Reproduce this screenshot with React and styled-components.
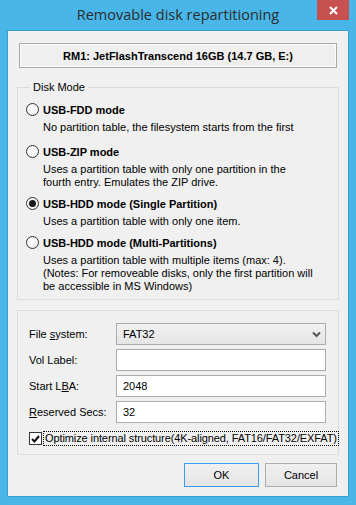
import React from 'react';
import styled, {createGlobalStyle} from 'styled-components';

const GlobalStyle = createGlobalStyle`
  html, body {
    margin: 0;
    padding: 0;
  }
  body {
    width: 356px;
    height: 505px;
    overflow: hidden;
    font-family: Tahoma, "Liberation Sans", sans-serif;
    font-size: 11px;
    color: #000;
  }
  * {
    box-sizing: border-box;
  }
`;

const Window = styled.div`
  width: 356px;
  height: 505px;
  display: flex;
  flex-direction: column;
  background: #48b6e8;
`;

const TitleBar = styled.div`
  height: 30px;
  flex: none;
  display: grid;
  grid-template-columns: 1fr auto 1fr;
  align-items: start;
`;

const Title = styled.div`
  grid-column: 2;
  padding-top: 6px;
  font-family: "Open Sans", "Noto Sans", sans-serif;
  font-size: 14.5px;
  line-height: 18px;
  color: #2d2d2d;
`;

const CloseButton = styled.div`
  grid-column: 3;
  justify-self: end;
  margin-right: 7px;
  width: 32px;
  height: 20px;
  background: #c75050;
  display: flex;
  align-items: center;
  justify-content: center;

  svg {
    width: 9px;
    height: 9px;
  }
`;

const Client = styled.div`
  flex: 1;
  margin: 0 7px 8px 7px;
  border: 1px solid #3b9fd2;
  background: #f0f0f0;
  display: flex;
  flex-direction: column;
`;

const DriveButton = styled.div`
  margin: 12px 11px 0 11px;
  height: 25px;
  border: 1px solid #a9a9a9;
  box-shadow: inset 0 0 0 1px #fbfbfb;
  background: #efefef;
  display: flex;
  align-items: center;
  justify-content: center;
  font-weight: bold;
`;

const Group = styled.fieldset`
  margin: ${({top}) => top}px 9px 0 9px;
  padding: ${({pad}) => pad};
  border: 1px solid #dcdcdc;
  min-width: 0;
`;

const Legend = styled.legend`
  margin-left: 4px;
  padding: 0 3px 0 3px;
  line-height: 13px;
  color: #000;
`;

const Option = styled.div`
  margin-top: ${({gap}) => gap}px;
`;

const RadioRow = styled.div`
  display: flex;
  align-items: center;
  height: 13px;
  gap: 4px;
  font-weight: bold;
`;

const Radio = styled.span`
  width: 13px;
  height: 13px;
  border-radius: 50%;
  border: 1px solid #333;
  background: radial-gradient(circle at 50% 40%, #ffffff 0%, #f4f4f4 60%, #e2e2e2 100%);
  display: flex;
  align-items: center;
  justify-content: center;
  flex: none;

  &::after {
    content: '';
    display: ${({checked}) => checked ? 'block' : 'none'};
    width: 7px;
    height: 7px;
    border-radius: 50%;
    background: #1a1a1a;
  }
`;

const Desc = styled.div`
  margin: 5px 0 0 17px;
  line-height: 13px;
`;

const Form = styled.div`
  display: grid;
  grid-template-columns: 87px 1fr;
  row-gap: 4px;
  align-items: center;
`;

const FieldLabel = styled.label`
  line-height: 13px;
`;

const TextBox = styled.div`
  height: 22px;
  border: 1px solid #ababab;
  background: #fff;
  display: flex;
  align-items: center;
  padding-left: 6px;
`;

const Select = styled(TextBox)`
  background: linear-gradient(#f2f2f2, #e5e5e5);
  border-color: #acacac;
  justify-content: space-between;
  padding-right: 4px;

  svg {
    width: 9px;
    height: 7px;
  }
`;

const CheckRow = styled.div`
  grid-column: 1 / 3;
  margin-top: 5px;
  height: 13px;
  display: flex;
  align-items: center;
  gap: 2px;
`;

const CheckBox = styled.span`
  width: 13px;
  height: 13px;
  border: 1px solid #333;
  background: #fff;
  display: flex;
  align-items: center;
  justify-content: center;
  flex: none;

  svg {
    width: 9px;
    height: 8px;
  }
`;

const CheckText = styled.span`
  outline: 1px dotted #000;
  outline-offset: 0;
  line-height: 13px;
  padding: 0 1px;
  letter-spacing: -0.1px;
  white-space: nowrap;
`;

const ButtonRow = styled.div`
  margin: 8px 11px 0 0;
  display: flex;
  justify-content: flex-end;
  gap: 6px;
`;

const Button = styled.div`
  width: ${({w}) => w}px;
  height: 24px;
  border: 1px solid ${({primary}) => primary ? '#3c9af0' : '#adadad'};
  background: linear-gradient(#f0f0f0, #e5e5e5);
  display: flex;
  align-items: center;
  justify-content: center;
`;

const modes = [
  {name: 'USB-FDD mode', desc: ['No partition table, the filesystem starts from the first'], gap: 9},
  {name: 'USB-ZIP mode', desc: ['Uses a partition table with only one partition in the', 'fourth entry. Emulates the ZIP drive.'], gap: 11},
  {name: 'USB-HDD mode (Single Partition)', desc: ['Uses a partition table with only one item.'], checked: true, gap: 8},
  {name: 'USB-HDD mode (Multi-Partitions)', desc: ['Uses a partition table with multiple items (max: 4).', '(Notes: For removeable disks, only the first partition will', 'be accessible in MS Windows)'], gap: 8},
];

export default function App() {
  return <>
    <GlobalStyle/>
    <Window>
      <TitleBar>
        <Title>Removable disk repartitioning</Title>
        <CloseButton>
          <svg viewBox="0 0 9 9">
            <path d="M1 1L8 8M8 1L1 8" stroke="#fff" strokeWidth="2"/>
          </svg>
        </CloseButton>
      </TitleBar>
      <Client>
        <DriveButton>RM1: JetFlashTranscend 16GB (14.7 GB, E:)</DriveButton>

        <Group top={13} pad="0 8px 6px 8px">
          <Legend>Disk Mode</Legend>
          {modes.map((m) => (
            <Option key={m.name} gap={m.gap}>
              <RadioRow>
                <Radio checked={m.checked}/>
                {m.name}
              </RadioRow>
              <Desc>
                {m.desc.map((line) => <div key={line}>{line}</div>)}
              </Desc>
            </Option>
          ))}
        </Group>

        <Group top={10} pad="12px 12px 9px 11px">
          <Form>
            <FieldLabel>File <u>s</u>ystem:</FieldLabel>
            <Select>
              FAT32
              <svg viewBox="0 0 9 7">
                <path d="M1 1.5L4.5 5L8 1.5" stroke="#555" strokeWidth="2" fill="none"/>
              </svg>
            </Select>
            <FieldLabel>Vol Label:</FieldLabel>
            <TextBox/>
            <FieldLabel>Start L<u>B</u>A:</FieldLabel>
            <TextBox>2048</TextBox>
            <FieldLabel><u>R</u>eserved Secs:</FieldLabel>
            <TextBox>32</TextBox>
            <CheckRow>
              <CheckBox>
                <svg viewBox="0 0 9 8">
                  <path d="M1 4L3.5 6.5L8 1" stroke="#111" strokeWidth="2" fill="none"/>
                </svg>
              </CheckBox>
              <CheckText>Optimize internal structure(4K-aligned, FAT16/FAT32/EXFAT)</CheckText>
            </CheckRow>
          </Form>
        </Group>

        <ButtonRow>
          <Button w={75} primary>OK</Button>
          <Button w={72}>Cancel</Button>
        </ButtonRow>
      </Client>
    </Window>
  </>;
}
